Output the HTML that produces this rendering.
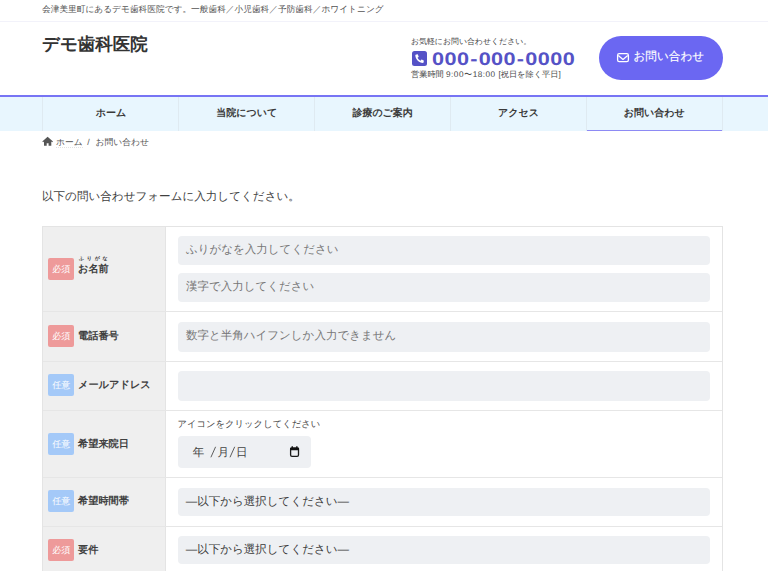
<!DOCTYPE html>
<html lang="ja">
<head>
<meta charset="utf-8">
<style>
*{box-sizing:border-box;margin:0;padding:0}
html,body{width:768px;height:571px;overflow:hidden;background:#fff}
body{font-family:"Liberation Sans",sans-serif;color:#333;position:relative;text-rendering:geometricPrecision}
.a{position:absolute;white-space:nowrap;line-height:1}
#topbar{left:0;top:0;width:768px;height:22px;border-bottom:1px solid #f2f2fa}
#toptext{left:42px;top:5px;font-size:8.7px;color:#555}
#logo{left:42px;top:36px;font-size:17.5px;font-weight:bold;color:#333;}
#tel1{left:411px;top:37.5px;font-size:7.9px;color:#484848}
#telicon{left:412px;top:51px;width:15px;height:15px;border-radius:2.5px;background:#5552c6}
#telnum{left:432px;top:49.5px;font-size:18.2px;font-weight:bold;color:#5552c6;transform-origin:0 0;transform:scaleX(1.19);letter-spacing:0.38px}
#telnum i{font-style:normal;margin:0 0.63px}
#tel2{left:411px;top:71px;font-size:8.2px;color:#484848}
#btn{left:599px;top:36px;width:124px;height:44px;border-radius:22px;background:#6b67f2}
#btnicon{left:617px;top:53px}
#btntext{left:633.5px;top:51px;font-size:11.6px;color:#fff;-webkit-text-stroke:0.15px #fff}
#nav{left:0;top:95px;width:768px;height:36px;background:#e8f6fe;border-top:2px solid #7774f4}
.nv{top:97px;height:34px;width:136px;border-left:1px solid #dfeaf1;text-align:center;font-size:10px;font-weight:bold;color:#3a3a3a;line-height:34px}
#crumb{left:56px;top:138px;font-size:8.75px;color:#555}
.hm{border-bottom:1px dotted #e2e2e2}
#lead{left:42px;top:191.8px;font-size:11.56px;color:#404040}
#tbl{left:42px;top:226px;width:681px;height:360px;border:1px solid #e4e4e4;border-bottom:none}
.th{left:43px;width:123px;background:#efefef;border-right:1px solid #e4e4e4}
.rowb{left:43px;width:679px;height:1px;background:#e6e6e6}
.inp{left:177.5px;width:532.5px;background:#eef0f3;border-radius:4px}
.ph{font-size:11.5px;color:#777}
.badge{left:48.2px;width:26px;height:22px;border-radius:2px;color:#fff;font-size:9px;text-align:center;line-height:22px}
.req{background:#ee9a9a}
.opt{background:#a4c9f8}
.lbl{left:78px;font-size:10.2px;font-weight:bold;color:#404040}
.ruby{font-size:5px;font-weight:bold;color:#333;letter-spacing:2.7px}
.help{font-size:9.3px;color:#3e3e3e}
.ph2{font-size:11.5px;color:#444}
.sel{font-size:11.5px;color:#383838}
.cal{width:10.5px;height:11px;border:1.6px solid #222;border-top-width:3px;border-radius:1.5px}
</style>
</head>
<body>
<div class="a" id="topbar"></div>
<div class="a" id="toptext">会津美里町にあるデモ歯科医院です。一般歯科／小児歯科／予防歯科／ホワイトニング</div>
<div class="a" id="logo">デモ歯科医院</div>
<div class="a" id="tel1">お気軽にお問い合わせください。</div>
<div class="a" id="telicon"><svg width="15" height="15" viewBox="0 0 15 15" style="position:absolute;left:0;top:0"><g transform="translate(3.3,3.3) scale(0.0168,0.0168)"><path fill="#fff" d="M497.39 361.8l-112-48a24 24 0 0 0-28 6.9l-49.6 60.6A370.66 370.66 0 0 1 130.6 204.11l60.6-49.6a23.940 23.940 0 0 0 6.9-28l-48-112A24.160 24.160 0 0 0 122.6.61l-104 24A24 24 0 0 0 0 48c0 256.5 207.9 464 464 464a24 24 0 0 0 23.4-18.6l24-104a24.290 24.290 0 0 0-14.01-27.6z"/></g></svg></div>
<div class="a" id="telnum">000<i>-</i>000<i>-</i>0000</div>
<div class="a" id="tel2">営業時間 <span style="letter-spacing:0.5px">9:00〜18:00 </span>[祝日を除く平日]</div>
<div class="a" id="btn"></div>
<svg class="a" style="left:612px;top:46px" width="24" height="20" viewBox="612 46 24 20"><rect x="617.6" y="53.6" width="10.8" height="8" rx="1.6" fill="none" stroke="#fff" stroke-width="1.3"/><polyline points="618.3,55.6 623,59.4 627.7,55.6" fill="none" stroke="#fff" stroke-width="1.3" stroke-linejoin="round"/></svg>
<div class="a" id="btntext">お問い合わせ</div>

<div class="a" id="nav"></div>

<svg class="a" style="left:42px;top:136px" width="12" height="11" viewBox="0 0 12 11"><path fill="#555" d="M5.6 0.8 L0.3 5.6 L1.1 6.3 L2 5.5 V9.8 H4.7 V7.2 H6.6 V9.8 H9.3 V5.5 L10.2 6.3 L11 5.6 Z"/></svg>
<div class="a nv" style="left:42.40px">ホーム</div>
<div class="a nv" style="left:178.26px">当院について</div>
<div class="a nv" style="left:314.12px">診療のご案内</div>
<div class="a nv" style="left:449.98px">アクセス</div>
<div class="a nv" style="left:585.84px">お問い合わせ</div>
<div class="a" style="left:722.3px;top:97px;width:1px;height:34px;background:#dfeaf1"></div>
<div class="a" style="left:586.8px;top:130px;width:135.5px;height:1px;background:#8d8af4"></div>
<div class="a" id="crumb"><span class="hm">ホーム</span><span style="margin:0 6px 0 4.5px">/</span>お問い合わせ</div>
<div class="a" id="lead">以下の問い合わせフォームに入力してください。</div>

<div class="a" id="tbl"></div>

<div class="a th" style="top:227px;height:84px"></div>
<div class="a th" style="top:312px;height:49px"></div>
<div class="a th" style="top:362px;height:48px"></div>
<div class="a th" style="top:411px;height:66px"></div>
<div class="a th" style="top:478px;height:48px"></div>
<div class="a th" style="top:527px;height:50px"></div>
<div class="a rowb" style="top:311px"></div>
<div class="a rowb" style="top:361px"></div>
<div class="a rowb" style="top:410px"></div>
<div class="a rowb" style="top:477px"></div>
<div class="a rowb" style="top:526px"></div>

<div class="a badge req" style="top:258px">必須</div>
<div class="a ruby" style="left:79px;top:257.3px">ふりがな</div>
<div class="a lbl" style="top:265.3px">お名前</div>
<div class="a inp" style="top:236px;height:29px"></div>
<div class="a ph" style="left:186px;top:245px">ふりがなを入力してください</div>
<div class="a inp" style="top:272.5px;height:29.5px"></div>
<div class="a ph" style="left:186px;top:282px">漢字で入力してください</div>

<div class="a badge req" style="top:325px">必須</div>
<div class="a lbl" style="top:332px">電話番号</div>
<div class="a inp" style="top:322px;height:29.5px"></div>
<div class="a ph" style="left:186px;top:331px">数字と半角ハイフンしか入力できません</div>

<div class="a badge opt" style="top:374px">任意</div>
<div class="a lbl" style="top:381px">メールアドレス</div>
<div class="a inp" style="top:371px;height:29.5px"></div>

<div class="a badge opt" style="top:433px">任意</div>
<div class="a lbl" style="top:440px">希望来院日</div>
<div class="a help" style="left:177.5px;top:420px">アイコンをクリックしてください</div>
<div class="a inp" style="top:436px;height:31.5px;width:133.5px"></div>
<div class="a ph2" style="left:192.8px;top:447.5px">年</div><div class="a ph2" style="left:217.5px;top:447.5px">月</div><div class="a ph2" style="left:235.9px;top:447.5px">日</div><svg class="a" style="left:200px;top:440px" width="50" height="25" viewBox="200 440 50 25"><line x1="210.9" y1="457.3" x2="215.6" y2="446.8" stroke="#555" stroke-width="0.95"/><line x1="230" y1="457.3" x2="234.7" y2="446.8" stroke="#555" stroke-width="0.95"/></svg>
<svg class="a" style="left:286px;top:442px" width="16" height="18" viewBox="286 442 16 18"><rect x="290.6" y="448.2" width="7.9" height="8.1" rx="1.4" fill="none" stroke="#1a1a1a" stroke-width="1.3"/><rect x="290" y="447.6" width="9.1" height="2.6" rx="1" fill="#111"/><rect x="291.6" y="446.2" width="1.3" height="2" fill="#111"/><rect x="296.2" y="446.2" width="1.3" height="2" fill="#111"/></svg>

<div class="a badge opt" style="top:490px">任意</div>
<div class="a lbl" style="top:497px">希望時間帯</div>
<div class="a inp" style="top:488px;height:28px"></div>
<div class="a sel" style="left:185.8px;top:497px">—以下から選択してください—</div>

<div class="a badge req" style="top:539px">必須</div>
<div class="a lbl" style="top:546px">要件</div>
<div class="a inp" style="top:536px;height:28px"></div>
<div class="a sel" style="left:185.8px;top:545px">—以下から選択してください—</div>
</body>
</html>
